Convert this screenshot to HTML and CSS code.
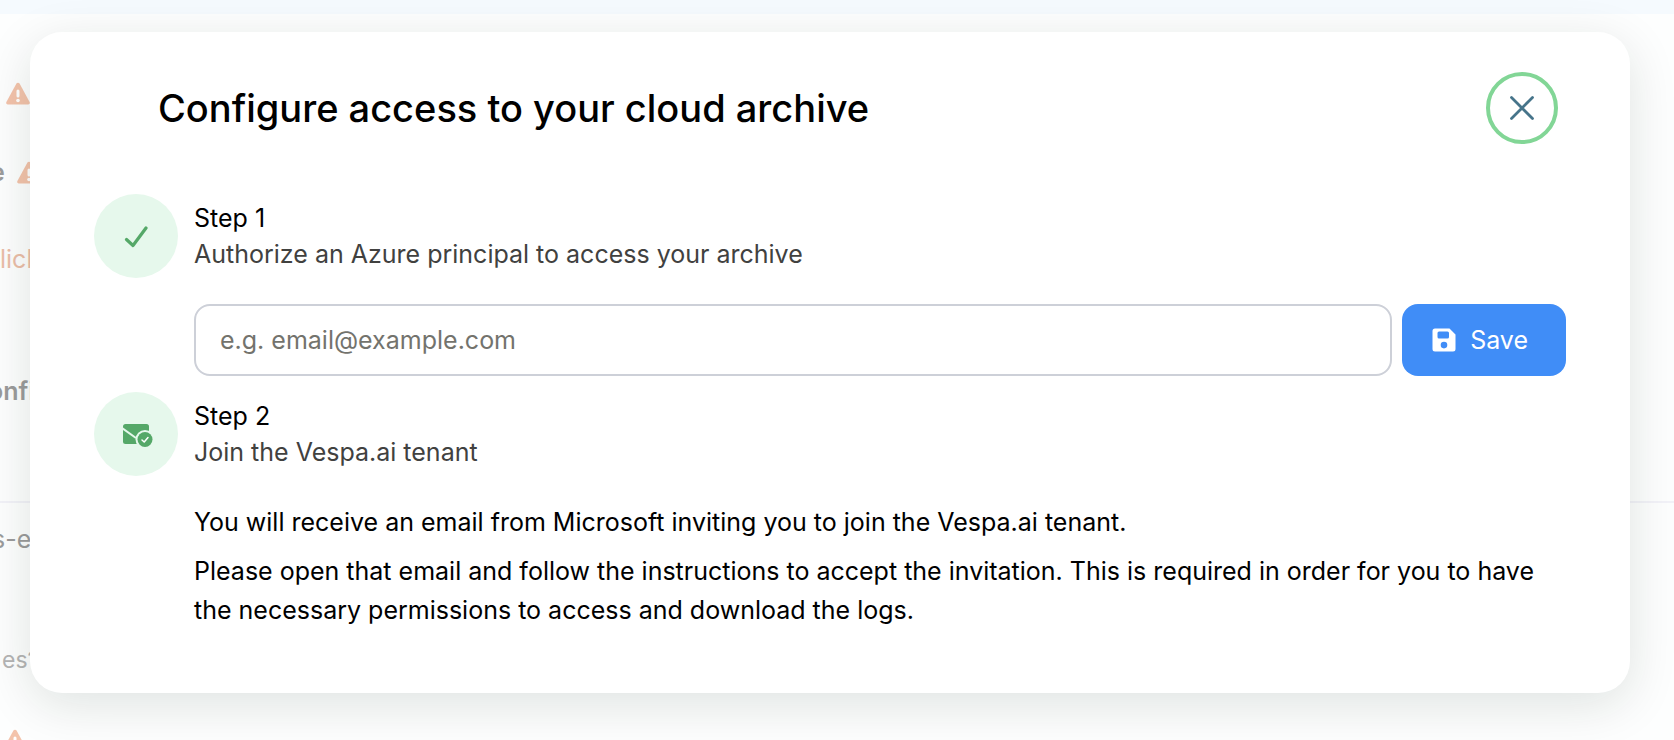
FILE: index.html
```html
<!DOCTYPE html>
<html lang="en">
<head>
  <meta charset="UTF-8">
  <title>Configure access to your cloud archive</title>
  <link rel="stylesheet" href="styles.css">
</head>
<body>

  <svg class="defs" aria-hidden="true">
    <symbol id="warning" viewBox="0 0 24 22">
      <path fill="#f3c3ab" d="M10.3 1.2a2 2 0 0 1 3.4 0l9.9 18.3a1.7 1.7 0 0 1-1.5 2.5H1.9A1.7 1.7 0 0 1 .4 19.5z"/>
      <path stroke="#fff" stroke-width="3" stroke-linecap="round" d="M12 8.500v5"/>
      <circle cx="12" cy="18" r="1.8" fill="#fff"/>
    </symbol>
  </svg>

  <div class="page" aria-hidden="true">
    <div class="topbar"></div>
    <div class="row first"><svg class="warn"><use href="#warning"/></svg></div>
    <div class="row second strong"><span>e</span><svg class="warn"><use href="#warning"/></svg></div>
    <div class="row link">lick</div>
    <div class="row tall strong">onfi</div>
    <div class="row divided">s-es</div>
    <div class="row small">es?</div>
    <div class="row last"><svg class="warn"><use href="#warning"/></svg></div>
  </div>

  <div class="modal" role="dialog" aria-labelledby="title">
    <div class="header">
      <h1 id="title">Configure access to your cloud archive</h1>
      <button class="close" type="button" aria-label="Close">
        <svg width="24" height="24" viewBox="0 0 24 24" fill="none" stroke="#46748a" stroke-width="2.8" stroke-linecap="round"><path d="M1.5 1.5l21 21M22.5 1.5l-21 21"/></svg>
      </button>
    </div>

    <div class="step">
      <div class="circle">
        <svg width="24" height="24" viewBox="0 0 24 24" fill="none" stroke="#55a868" stroke-width="3.2" stroke-linecap="round" stroke-linejoin="round"><path d="M2.5 15.5l6.500 6L22 4"/></svg>
      </div>
      <label class="step-text" for="email">
        <span class="name">Step 1</span>
        <span class="desc">Authorize an Azure principal to access your archive</span>
      </label>
    </div>
    <form class="form">
      <input id="email" type="text" placeholder="e.g. email@example.com">
      <button class="save" type="button">
        <svg width="24" height="24" viewBox="0 0 24 24"><path fill="#fff" fill-rule="evenodd" d="M3 .5h14.5l6 6V21a2.500 2.500 0 0 1-2.500 2.500H3A2.500 2.500 0 0 1 .5 21V3A2.500 2.500 0 0 1 3 .5zM7 3.500a1.500 1.500 0 0 0-1.500 1.500v4A1.500 1.500 0 0 0 7 10.500h8.500A1.500 1.500 0 0 0 17 9V5a1.500 1.500 0 0 0-1.500-1.500zM12 13.800a3.300 3.300 0 1 0 0 6.600 3.300 3.300 0 0 0 0-6.600z"/></svg>
        Save
      </button>
    </form>

    <div class="step">
      <div class="circle">
        <svg class="mail" width="30" height="24" viewBox="0 0 30 24" fill="none">
          <rect y="1" width="26" height="20" rx="2.5" fill="#55a868"/>
          <path d="M-1 5l14 10" stroke="#e6f8ec" stroke-width="2"/>
          <circle cx="22" cy="16.5" r="9.5" fill="#e6f8ec"/>
          <circle cx="22" cy="16.5" r="7.5" fill="#55a868"/>
          <path d="M19 17l2.2 2L25 14.5" stroke="#fff" stroke-width="1.5" stroke-linecap="round" stroke-linejoin="round"/>
        </svg>
      </div>
      <div class="step-text">
        <span class="name">Step 2</span>
        <span class="desc">Join the Vespa.ai tenant</span>
      </div>
    </div>
    <div class="info">
      <p>You will receive an email from Microsoft inviting you to join the Vespa.ai tenant.</p>
      <p>Please open that email and follow the instructions to accept the invitation. This is required in order for you to have the necessary permissions to access and download the logs.</p>
    </div>
  </div>

</body>
</html>
```

FILE: styles.css
```css
* { box-sizing: border-box; }
body { margin: 0; height: 100vh; overflow: hidden; position: relative; background: #fdfefe; font-family: Inter, "Liberation Sans", sans-serif; font-size: 25px; color: #000; }
.defs { display: none; }

/* page behind the dialog */
.page { color: #9b9b9b; }
.topbar { height: 14px; background: #f5fafe; }
.row { display: flex; align-items: center; height: 80px; }
.row.first { height: 118px; padding: 40px 0 0 6px; }
.row.strong { font-weight: 600; text-indent: -10px; gap: 12px; }
.row.link { height: 90px; color: #ebbda8; }
.row.second { margin-bottom: 2px; }
.row.tall { height: 174px; text-indent: -12px; }
.row.divided { height: 122px; margin-top: 23px; padding-bottom: 48px; border-top: 2px solid #f2f2f8; text-indent: -8px; }
.row.small { height: 74px; padding-left: 2px; font-size: 23px; color: #b4b4b4; }
.row.last { height: 86px; padding-left: 3px; }
.warn { flex: none; width: 24px; height: 23px; }

.modal { position: absolute; top: 32px; left: 30px; right: 44px; padding: 40px 64px 63px; background: #fff; border-radius: 32px; box-shadow: 0 12px 50px rgba(10, 30, 20, 0.12); }
.header { display: flex; align-items: center; justify-content: space-between; padding: 0 8px 0 64px; margin-bottom: 50px; }
h1 { margin: 0; font-size: 38px; line-height: 48px; font-weight: 500; }
button { font: inherit; border: 0; cursor: pointer; }
.close { display: flex; align-items: center; justify-content: center; width: 72px; height: 72px; padding: 0; background: #fff; border: 4px solid #82d696; border-radius: 50%; }

.step { display: flex; align-items: center; gap: 16px; }
.circle { display: flex; align-items: center; justify-content: center; width: 84px; height: 84px; border-radius: 50%; background: #e6f8ec; }
.mail { margin: 2px 0 0 3px; }
.step-text span { display: block; line-height: 36px; }
.desc { color: #41413f; }

.form { display: flex; gap: 10px; margin: 26px 0 16px 100px; }
.form input { flex: 1; min-width: 0; height: 72px; padding: 0 24px; font: inherit; border: 2px solid #cdd0d8; border-radius: 16px; background: #fff; }
.form input::placeholder { color: #73736d; }
.save { display: flex; align-items: center; gap: 14px; height: 72px; padding: 0 38px 0 30px; color: #fff; background: #408df7; border-radius: 16px; }

.info { margin: 27px 0 0 100px; line-height: 39px; }
.info p { margin: 0 0 10px; }
.info p:last-child { margin: 0; }
```
